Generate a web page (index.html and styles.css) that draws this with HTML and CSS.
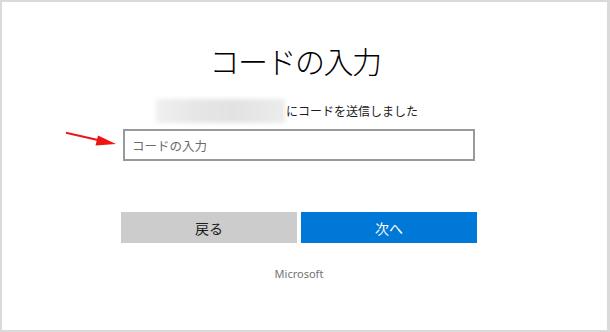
FILE: index.html
```html
<!DOCTYPE html>
<html>
<head>
  <meta charset="utf-8">
  <title>コードの入力</title>
  <link rel="stylesheet" href="styles.css">
</head>
<body>
  <div class="frame">
    <div class="panel">
      <h1 class="title">コードの入力</h1>
      <div class="sent">
        <span class="email"></span>
        <span class="sent-text">にコードを送信しました</span>
      </div>
      <input type="text" class="code" placeholder="コードの入力">
      <div class="actions">
        <button class="btn btn-back">戻る</button>
        <button class="btn btn-next">次へ</button>
      </div>
      <div class="brand">Microsoft</div>
    </div>
  </div>
  <!-- red annotation arrow pointing at the input -->
  <svg class="arrow" xmlns="http://www.w3.org/2000/svg" viewBox="0 0 130 160">
    <line x1="66" y1="132.8" x2="100" y2="140.5" stroke="#f01414" stroke-width="2"/>
    <polygon points="116,144 95.5,145.5 98,135.5" fill="#f01414"/>
  </svg>
</body>
</html>
```

FILE: styles.css
```css
/* Page */
body {
  margin: 0;
  font-family: 'Noto Sans CJK JP', 'Noto Sans', sans-serif;
  color: #1b1b1b;
  background: #fff;
}
.frame {
  width: 610px;
  height: 332px;
  box-sizing: border-box;
  border: 2px solid #dadada;
  border-right-width: 3px;
  background: #fff;
}
/* Centered column */
.panel {
  width: 356px;
  margin-left: 119px;
  padding-top: 40px;
  display: flex;
  flex-direction: column;
}
.title {
  margin: 0;
  padding-right: 8px;
  font-size: 30px;
  line-height: 37px;
  font-weight: 300;
  letter-spacing: -1.5px;
  text-align: center;
  color: #000;
}
.sent {
  display: flex;
  justify-content: center;
  align-items: center;
  margin-top: 20px;
  padding-right: 24px;
  font-size: 12px;
  line-height: 24px;
  color: #1b1b1b;
}
.email {
  width: 129px;
  height: 24px;
  background: linear-gradient(90deg, #f0f0f0, #e6e6e6 30%, #e2e2e2 60%, #ececec);
  filter: blur(2px);
}
.sent-text {
  margin-left: 1px;
}
/* Input */
.code {
  margin: 6px 2px 0;
  height: 32px;
  box-sizing: border-box;
  border: 2px solid #999;
  padding: 0 7px;
  font-family: 'Noto Sans CJK JP', sans-serif;
  font-size: 12.5px;
  color: #000;
  outline: none;
}
.code::placeholder {
  color: #6b6b6b;
}
/* Buttons */
.actions {
  display: flex;
  gap: 4px;
  margin-top: 51px;
}
.btn {
  flex: 1;
  height: 31px;
  border: none;
  padding: 0;
  font-family: 'Noto Sans CJK JP', sans-serif;
  font-size: 14px;
  cursor: pointer;
}
.btn-back {
  background: #cccccc;
  color: #1b1b1b;
}
.btn-next {
  background: #0078d7;
  color: #fff;
}
.brand {
  margin-top: 23px;
  font-family: 'Noto Sans', sans-serif;
  font-size: 11px;
  line-height: 16px;
  text-align: center;
  color: #737373;
}
/* Annotation */
.arrow {
  position: absolute;
  left: 0;
  top: 0;
  width: 130px;
  height: 160px;
}
```
